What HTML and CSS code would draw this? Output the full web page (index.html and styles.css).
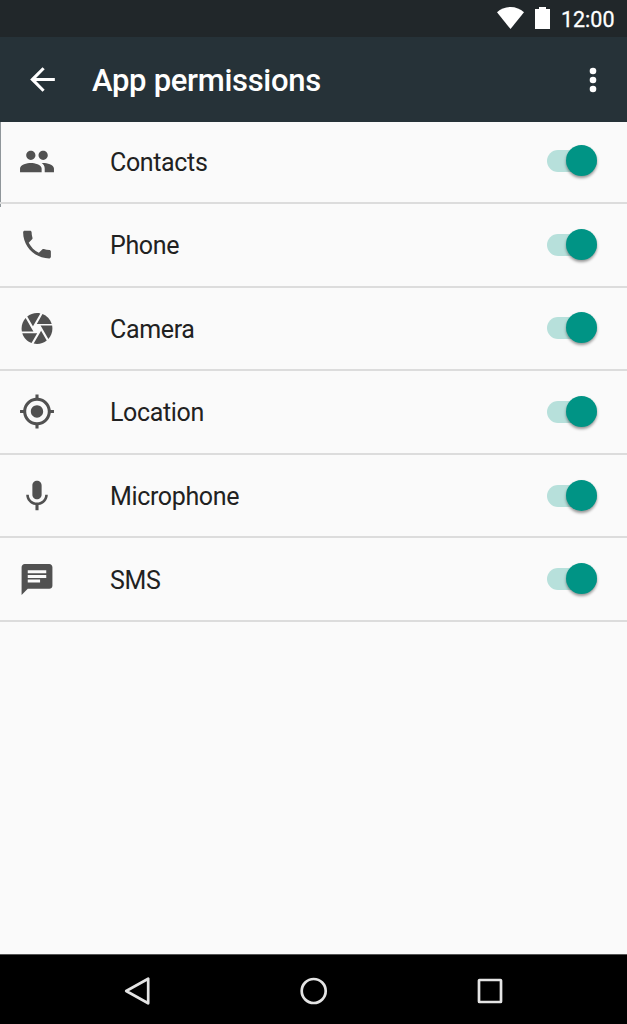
FILE: index.html
```html
<!DOCTYPE html>
<html lang="en">
<head>
  <meta charset="UTF-8" />
  <meta name="viewport" content="width=device-width, initial-scale=1.0" />
  <title>App permissions</title>
  <link rel="stylesheet" href="styles.css">
</head>
<body>
  <div class="status-bar">
    <svg class="wifi" viewBox="0 0 27 22"><path d="M13.5 22 0 5.2C3.6 2 8.2 0 13.5 0S23.4 2 27 5.2z"/></svg>
    <svg class="battery" viewBox="0 0 15 22"><path d="M4 0h7v2h4v20H0V2h4z"/></svg>
    <span class="time">12:00</span>
  </div>

  <header class="app-bar">
    <svg class="back" viewBox="0 0 24 24"><path d="M20 11H7.83l5.590-5.590L12 4l-8 8 8 8 1.410-1.410L7.830 13H20v-2z"/></svg>
    <h1>App permissions</h1>
    <svg class="more" viewBox="0 0 8 26"><circle cx="4" cy="4" r="3.3"/><circle cx="4" cy="13" r="3.3"/><circle cx="4" cy="22" r="3.3"/></svg>
  </header>

  <ul class="permissions">
    <li class="row">
      <svg class="icon" viewBox="0 0 24 24"><path d="M16 11c1.660 0 2.990-1.340 2.990-3S17.660 5 16 5c-1.660 0-3 1.340-3 3s1.340 3 3 3zm-8 0c1.660 0 2.990-1.340 2.990-3S9.660 5 8 5C6.340 5 5 6.340 5 8s1.340 3 3 3zm0 2c-2.330 0-7 1.170-7 3.500V19h14v-2.500c0-2.330-4.670-3.500-7-3.500zm8 0c-.290 0-.620.020-.970.050 1.160.840 1.970 1.970 1.970 3.450V19h6v-2.500c0-2.330-4.670-3.500-7-3.500z"/></svg>
      <span class="label">Contacts</span>
      <span class="switch"></span>
    </li>
    <li class="row">
      <svg class="icon" viewBox="0 0 24 24"><path d="M6.620 10.790c1.440 2.830 3.760 5.140 6.590 6.590l2.200-2.200c.270-.270.670-.360 1.020-.240 1.120.370 2.330.570 3.570.570.550 0 1 .450 1 1V20c0 .550-.450 1-1 1-9.390 0-17-7.610-17-17 0-.550.450-1 1-1h3.500c.550 0 1 .450 1 1 0 1.250.200 2.450.570 3.570.110.350.030.740-.250 1.020l-2.200 2.200z"/></svg>
      <span class="label">Phone</span>
      <span class="switch"></span>
    </li>
    <li class="row">
      <svg class="icon" viewBox="0 0 24 24"><path d="M9.400 10.500l4.770-8.260C13.470 2.090 12.750 2 12 2c-2.400 0-4.600.850-6.320 2.250l3.660 6.350.060-.100zM21.540 9c-.920-2.920-3.150-5.260-6-6.340L11.880 9h9.660zm.260 1h-7.490l.290.500 4.760 8.250C21 16.970 22 14.610 22 12c0-.690-.070-1.350-.200-2zM8.540 12l-3.900-6.750C3.010 7.030 2 9.390 2 12c0 .690.070 1.350.200 2h7.490l-1.150-2zm-6.080 3c.920 2.920 3.150 5.260 6 6.340L12.120 15H2.460zm11.270 0l-3.900 6.760c.700.150 1.420.240 2.170.240 2.400 0 4.600-.850 6.320-2.250l-3.660-6.350-.930 1.600z"/></svg>
      <span class="label">Camera</span>
      <span class="switch"></span>
    </li>
    <li class="row">
      <svg class="icon" viewBox="0 0 24 24"><path d="M12 8c-2.210 0-4 1.790-4 4s1.790 4 4 4 4-1.790 4-4-1.790-4-4-4zm8.940 3c-.460-4.170-3.770-7.480-7.940-7.940V1h-2v2.060C6.830 3.520 3.520 6.830 3.060 11H1v2h2.060c.460 4.170 3.770 7.480 7.940 7.940V23h2v-2.060c4.170-.460 7.480-3.770 7.940-7.940H23v-2h-2.060zM12 19c-3.870 0-7-3.130-7-7s3.130-7 7-7 7 3.130 7 7-3.130 7-7 7z"/></svg>
      <span class="label">Location</span>
      <span class="switch"></span>
    </li>
    <li class="row">
      <svg class="icon" viewBox="0 0 24 24"><path d="M12 14.500c1.660 0 2.990-1.340 2.990-3L15 5.500c0-1.660-1.340-3-3-3s-3 1.340-3 3v6c0 1.660 1.340 3 3 3zm5.300-3c0 3-2.540 5.100-5.300 5.100s-5.300-2.100-5.300-5.100H5c0 3.410 2.720 6.230 6 6.720v3.280h2v-3.280c3.280-.480 6-3.300 6-6.720h-1.700z"/></svg>
      <span class="label">Microphone</span>
      <span class="switch"></span>
    </li>
    <li class="row">
      <svg class="icon" viewBox="0 0 24 24"><path d="M20 2H4c-1.100 0-1.990.900-1.990 2L2 22l4-4h14c1.100 0 2-.900 2-2V4c0-1.100-.900-2-2-2zM6 9h12v2H6V9zm8 5H6v-2h8v2zm4-6H6V6h12v2z"/></svg>
      <span class="label">SMS</span>
      <span class="switch"></span>
    </li>
  </ul>

  <nav class="nav-bar">
    <svg class="nav-icon" viewBox="0 0 30 30"><path d="M4.2 15 26.200 2.700v24.600z"/></svg>
    <svg class="nav-icon" viewBox="0 0 30 30"><circle cx="14.700" cy="15" r="12"/></svg>
    <svg class="nav-icon" viewBox="0 0 30 30"><rect x="4" y="4" width="22" height="22" rx=".5"/></svg>
  </nav>
</body>
</html>
```
FILE: styles.css
```css
* {
  box-sizing: border-box;
  margin: 0;
  padding: 0;
}
body {
  height: 100vh;
  display: flex;
  flex-direction: column;
  background: #fafafa;
  font-family: Roboto, sans-serif;
  color: #212121;
  overflow: hidden;
}
svg {
  display: block;
  flex: none;
}
.status-bar {
  height: 37px;
  flex: none;
  display: flex;
  align-items: center;
  justify-content: flex-end;
  padding: 0 12.5px 1px 0;
  background: #21272a;
  color: #fff;
  fill: #fff;
}
.wifi {
  width: 27px;
  height: 22px;
  margin-right: 11px;
}
.battery {
  width: 15px;
  height: 22px;
  margin-right: 11px;
}
.time {
  font-size: 21.5px;
  -webkit-text-stroke: 0.3px #fff;
  line-height: 34px;
  padding-top: 3px;
}
.app-bar {
  position: relative;
  height: 85px;
  flex: none;
  display: flex;
  align-items: center;
  padding: 0 30px 0 24px;
  background: #263238;
  color: #fff;
  fill: #fff;
}
.back {
  width: 37px;
  height: 37px;
}
h1 {
  flex: 1;
  margin-left: 31px;
  font-size: 31px;
  font-weight: 500;
  letter-spacing: -0.3px;
  line-height: 40px;
  padding-top: 2px;
}
.more {
  width: 8px;
  height: 26px;
}
.permissions {
  flex: 1;
  margin-top: -1.6px;
  list-style: none;
  /* short edge line beside the first row */
  background: linear-gradient(#8f969a, #8f969a) 0 0 / 1px 87px no-repeat;
}
.row {
  height: 83.6px;
  display: flex;
  align-items: center;
  padding: 0 30px 0 18px;
  border-bottom: 2px solid #dcdcdc;
}
.icon {
  width: 38px;
  height: 37px;
  fill: #515151;
}
.label {
  flex: 1;
  margin-left: 54px;
  font-size: 25px;
  letter-spacing: -0.35px;
  line-height: 30px;
  padding-top: 3px;
}
.switch {
  position: relative;
  width: 50px;
  height: 22px;
  border-radius: 11px;
  background: #b7e0db;
}
.switch::after {
  content: "";
  position: absolute;
  top: -5px;
  right: 0;
  width: 31px;
  height: 31px;
  border-radius: 50%;
  background: #009485;
  box-shadow: 0 2px 3px rgba(0, 0, 0, 0.4);
}
.nav-bar {
  height: 70px;
  flex: none;
  display: flex;
  align-items: center;
  justify-content: center;
  gap: 146.5px;
  padding-top: 2px;
  background: #000;
  border-top: 1px solid #555;
}
.nav-icon {
  width: 30px;
  height: 30px;
  fill: none;
  stroke: #e4e4e4;
  stroke-width: 2.7;
  stroke-linejoin: round;
}
```
